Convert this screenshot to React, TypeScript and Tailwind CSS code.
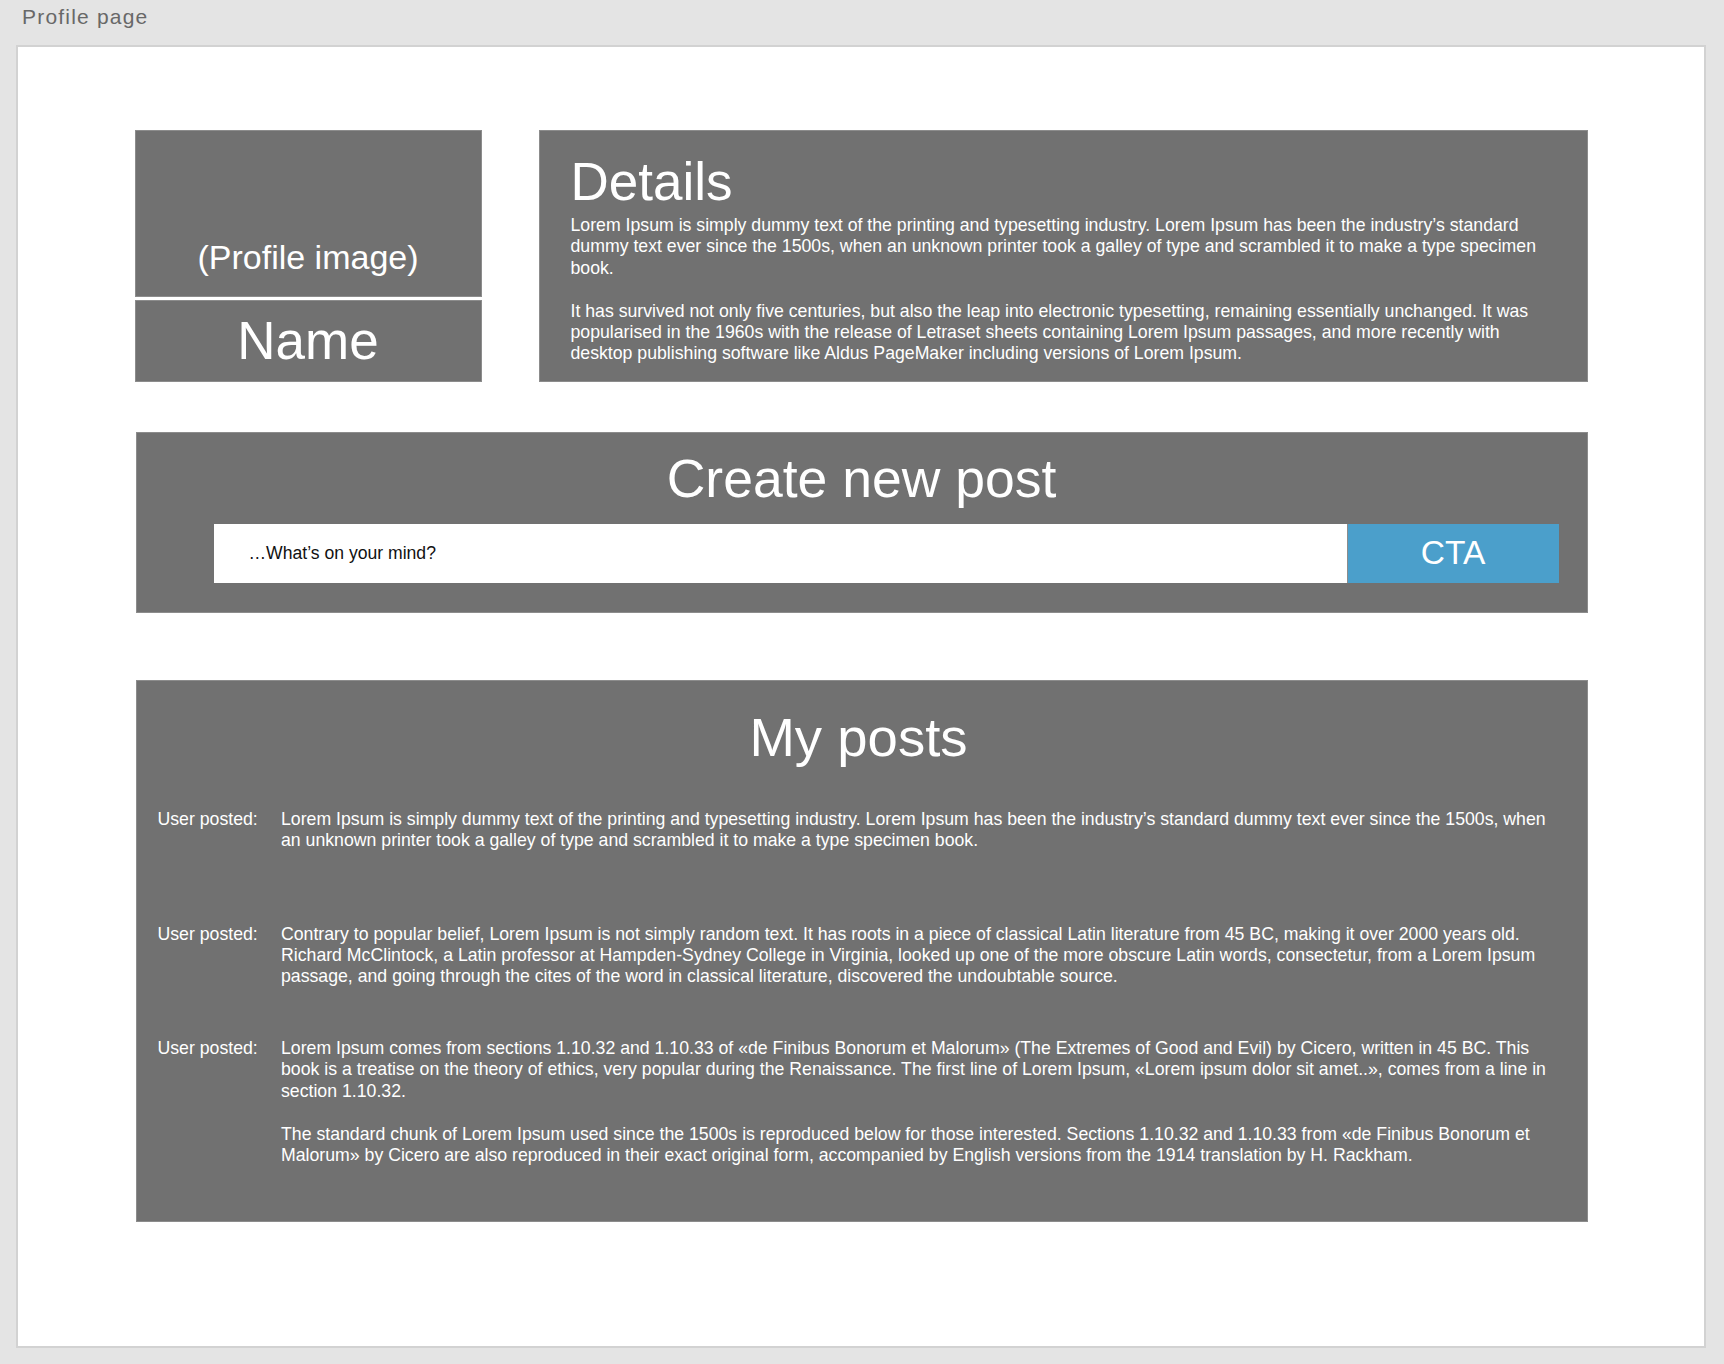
const font = { fontFamily: '"Liberation Sans", Arial, Helvetica, sans-serif' };

const posts: string[][] = [
  [
    "Lorem Ipsum is simply dummy text of the printing and typesetting industry. Lorem Ipsum has been the industry’s standard dummy text ever since the 1500s, when an unknown printer took a galley of type and scrambled it to make a type specimen book.",
  ],
  [
    "Contrary to popular belief, Lorem Ipsum is not simply random text. It has roots in a piece of classical Latin literature from 45 BC, making it over 2000 years old.\nRichard McClintock, a Latin professor at Hampden-Sydney College in Virginia, looked up one of the more obscure Latin words, consectetur, from a Lorem Ipsum passage, and going through the cites of the word in classical literature, discovered the undoubtable source.",
  ],
  [
    "Lorem Ipsum comes from sections 1.10.32 and 1.10.33 of «de Finibus Bonorum et Malorum» (The Extremes of Good and Evil) by Cicero, written in 45 BC. This book is a treatise on the theory of ethics, very popular during the Renaissance. The first line of Lorem Ipsum, «Lorem ipsum dolor sit amet..», comes from a line in section 1.10.32.",
    "The standard chunk of Lorem Ipsum used since the 1500s is reproduced below for those interested. Sections 1.10.32 and 1.10.33 from «de Finibus Bonorum et Malorum» by Cicero are also reproduced in their exact original form, accompanied by English versions from the 1914 translation by H. Rackham.",
  ],
];

const PostItem = ({ paragraphs }: { paragraphs: string[] }) => (
  <div className="flex min-h-[114.5px]">
    <div className="w-[123.5px] shrink-0">User posted:</div>
    <div className="flex flex-1 flex-col gap-[21.4px]">
      {paragraphs.map((p, i) => (
        <p key={i} className="whitespace-pre-line">
          {p}
        </p>
      ))}
    </div>
  </div>
);

const App = () => {
  return (
    <div className="flex min-h-[1364px] w-[1724px] flex-col bg-[#e4e4e4]" style={font}>
      <div className="h-[45px] pl-[22px] pt-[5px] text-[21px] leading-[24px] tracking-[1.2px] text-[#686868]">
        Profile page
      </div>
      <div className="ml-[16px] mr-[18px] h-[1303px] border-2 border-[#d2d2d2] bg-white">
        <div className="mx-auto w-[1453px] pt-[83px] text-white">
          {/* top row */}
          <div className="flex h-[252px] gap-[57px]">
            <div className="flex w-[347px] shrink-0 flex-col gap-[3px]">
              <div className="flex flex-1 flex-col items-center justify-end border border-[#8c8c8c] bg-[#717171] pb-[19px] text-[34px] leading-[40px]">
                (Profile image)
              </div>
              <div className="flex h-[82px] items-center justify-center border border-[#8c8c8c] bg-[#717171] text-[53px] leading-[56px]">
                Name
              </div>
            </div>
            <div className="flex-1 border border-[#8c8c8c] bg-[#717171] px-[31px] pt-[23px]">
              <h1 className="text-[53px] leading-[56px]">Details</h1>
              <div className="mt-[5px] flex flex-col gap-[21.4px] text-[17.7px] leading-[21.4px]">
                <p>
                  Lorem Ipsum is simply dummy text of the printing and typesetting industry. Lorem Ipsum has been the
                  industry’s standard dummy text ever since the 1500s, when an unknown printer took a galley of type and
                  scrambled it to make a type specimen book.
                </p>
                <p>
                  It has survived not only five centuries, but also the leap into electronic typesetting, remaining
                  essentially unchanged. It was popularised in the 1960s with the release of Letraset sheets containing
                  Lorem Ipsum passages, and more recently with desktop publishing software like Aldus PageMaker including
                  versions of Lorem Ipsum.
                </p>
              </div>
            </div>
          </div>

          {/* create post */}
          <div className="mt-[49.5px] ml-px flex h-[181px] flex-col border border-[#8c8c8c] bg-[#717171] pt-[18px]">
            <h2 className="text-center text-[53.5px] leading-[56px]">Create new post</h2>
            <div className="mt-[17px] ml-[77px] mr-[28px] flex h-[59px]">
              <div className="flex flex-1 items-center bg-white pl-[35px] text-[17.6px] text-[#111]">
                …What’s on your mind?
              </div>
              <button className="w-[212px] border-l border-[#8c8c8c] bg-[#4b9fcb] text-[33.5px] leading-none text-white">
                CTA
              </button>
            </div>
          </div>

          {/* my posts */}
          <div className="mt-[67.5px] ml-px border border-[#8c8c8c] bg-[#717171] pb-[55px] pl-[21px] pr-[27px] pt-[29px]">
            <h2 className="text-center text-[54.5px] leading-[56px]">My posts</h2>
            <div className="mt-[43px] flex flex-col text-[17.7px] leading-[21.4px]">
              {posts.map((p, i) => (
                <PostItem key={i} paragraphs={p} />
              ))}
            </div>
          </div>
        </div>
      </div>
    </div>
  );
};

export default App;
